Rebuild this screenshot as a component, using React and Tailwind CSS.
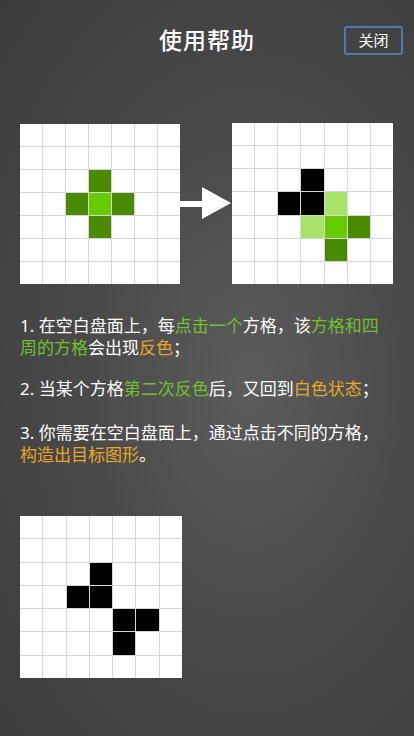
import React from "react";

const D = "#4a8a00";
const B = "#66cc00";
const L = "#a8e46a";
const K = "#000000";

const before = { "2,3": D, "3,2": D, "3,3": B, "3,4": D, "4,3": D };
const after = {
  "2,3": K,
  "3,2": K,
  "3,3": K,
  "3,4": L,
  "4,3": L,
  "4,4": B,
  "4,5": D,
  "5,4": D,
};
const target = { "2,3": K, "3,2": K, "3,3": K, "4,4": K, "4,5": K, "5,4": K };

function Board({ cells, size }) {
  const items = [];
  for (let r = 0; r < 7; r++) {
    for (let c = 0; c < 7; c++) {
      const color = cells[r + "," + c] || "#ffffff";
      items.push(<div key={r + "-" + c} style={{ background: color }} />);
    }
  }
  return (
    <div
      className="grid grid-cols-7 grid-rows-7 gap-px bg-[#d6d6d6] shrink-0"
      style={{ width: size, height: size }}
    >
      {items}
    </div>
  );
}

const G = ({ children }) => <span className="text-[#72c02c]">{children}</span>;
const O = ({ children }) => <span className="text-[#e8a823]">{children}</span>;

export default function App() {
  return (
    <div
      className="w-[414px] h-[736px] overflow-hidden relative text-white bg-[radial-gradient(ellipse_at_60%_52%,#5c5c5c_0%,#4a4a4a_45%,#3b3b3b_100%)]"
      style={{ fontFamily: '"Noto Sans", "Noto Sans CJK SC", sans-serif' }}
    >
      <div className="h-[80px] flex items-center justify-center relative">
        <h1 className="text-[23px] font-medium tracking-[1px]">使用帮助</h1>
        <button className="absolute right-[11px] top-[26px] w-[59px] h-[29px] border-2 border-[#5079b0] rounded-[3px] text-[15px] flex items-center justify-center">
          关闭
        </button>
      </div>

      <div className="mt-[43px] flex items-center pl-[20px]">
        <Board cells={before} size={160} />
        <svg width="52" height="34" viewBox="0 0 52 34" className="shrink-0">
          <rect x="0" y="14" width="24" height="6" fill="#ffffff" />
          <polygon points="22,0 51,16 22,32" fill="#ffffff" />
        </svg>
        <Board cells={after} size={161} />
      </div>

      <div className="mt-[31px] px-[20px] text-[17px] leading-[22px]">
        <p>
          1. 在空白盘面上，每<G>点击一个</G>方格，该<G>方格和四周的方格</G>会出现<O>反色</O>；
        </p>
        <p className="mt-[19px]">
          2. 当某个方格<G>第二次反色</G>后，又回到<O>白色状态</O>；
        </p>
        <p className="mt-[22px]">
          3. 你需要在空白盘面上，通过点击不同的方格，<O>构造出目标图形</O>。
        </p>
      </div>

      <div className="mt-[50px] pl-[20px]">
        <Board cells={target} size={162} />
      </div>
    </div>
  );
}
